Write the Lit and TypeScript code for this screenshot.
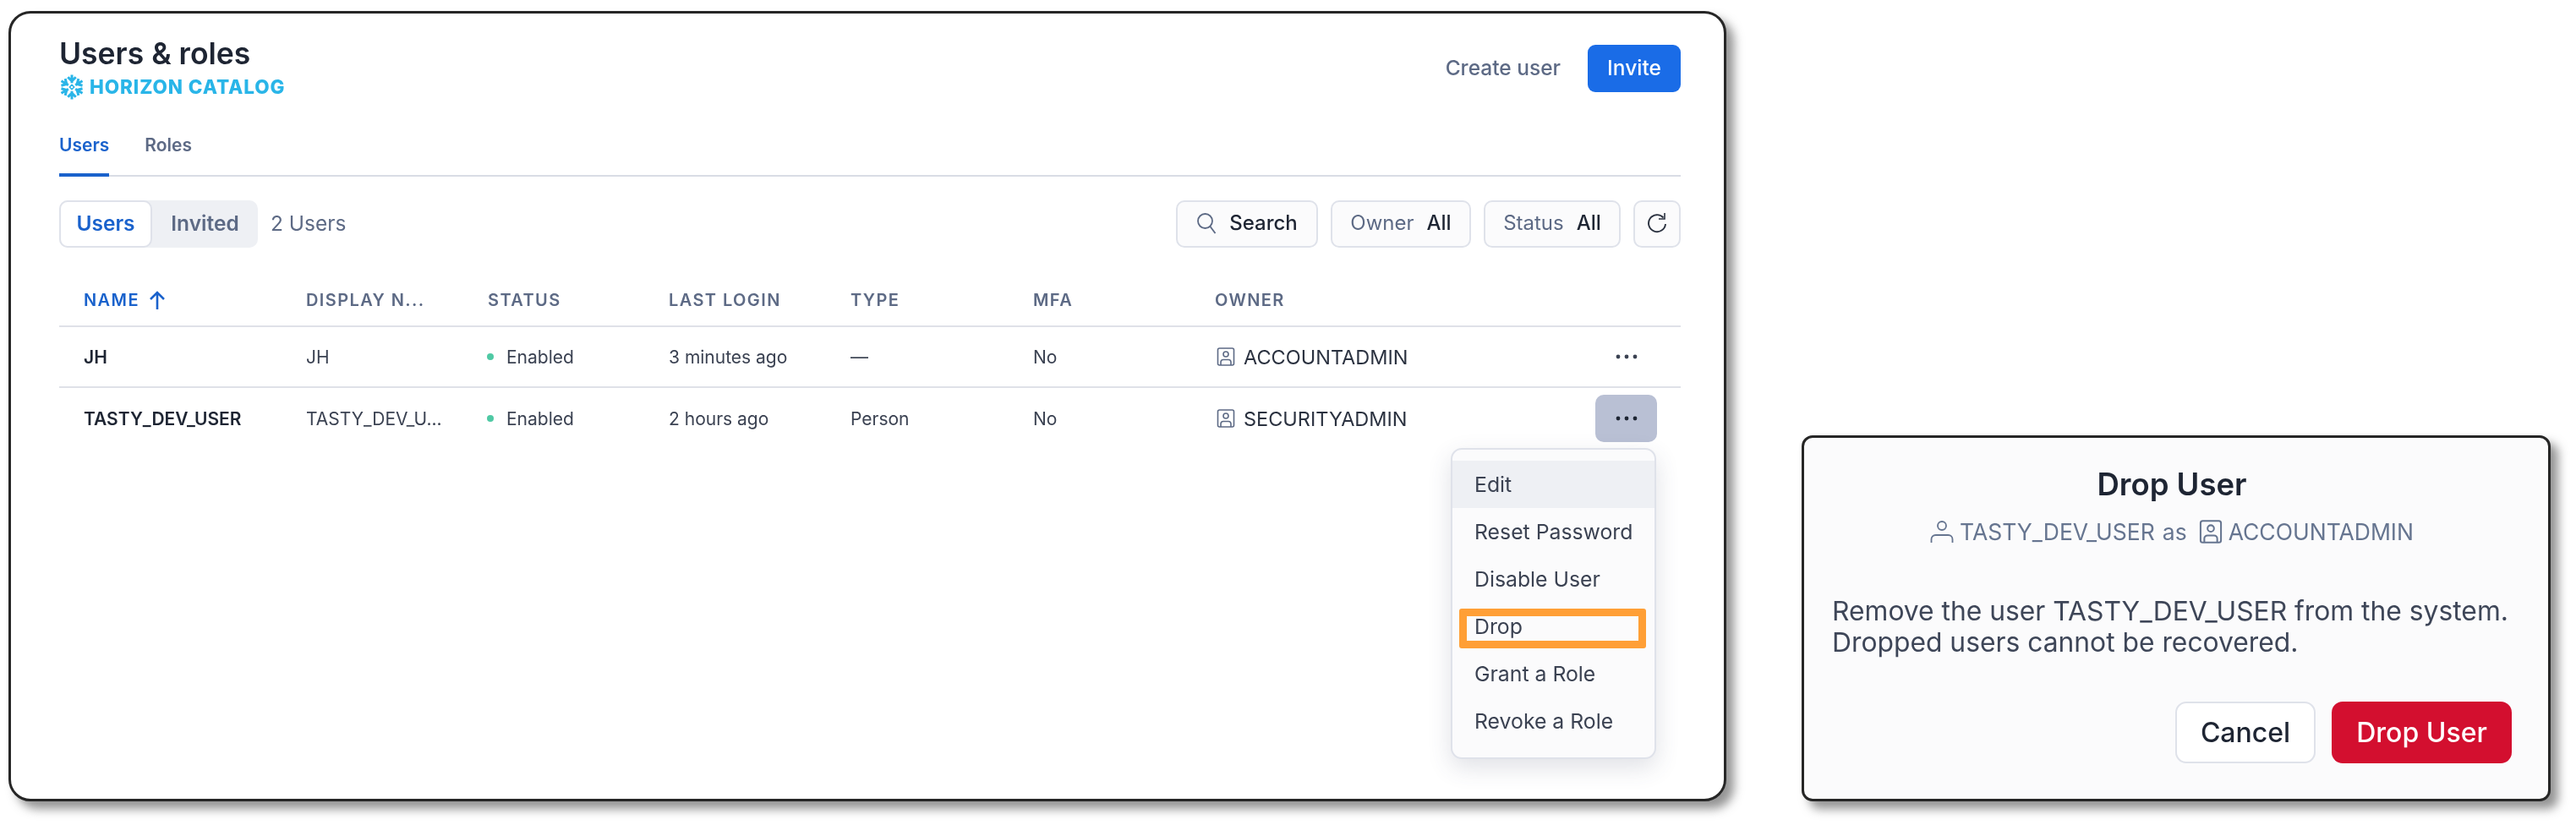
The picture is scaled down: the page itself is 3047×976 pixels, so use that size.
import { LitElement, html, css, svg } from "lit";
import { customElement } from "lit/decorators.js";

const roleIcon = html`<svg class="role" viewBox="0 0 22 22" fill="none" stroke="currentColor" stroke-width="1.6"><rect x="1.5" y="1" width="19" height="20" rx="2"/><circle cx="11" cy="8" r="3"/><path d="M5 21v-3.5a3 3 0 0 1 3-3h6a3 3 0 0 1 3 3V21"/></svg>`;
const userIcon = html`<svg class="user" viewBox="0 0 28 28" fill="none" stroke="currentColor" stroke-width="1.8"><circle cx="14" cy="7" r="5"/><path d="M1.5 27v-4a5 5 0 0 1 5-5h15a5 5 0 0 1 5 5v4"/></svg>`;
const dots = html`<svg class="dots" viewBox="0 0 26 6" fill="currentColor"><circle cx="3" cy="3" r="2.4"/><circle cx="13" cy="3" r="2.4"/><circle cx="23" cy="3" r="2.4"/></svg>`;
const flakeArm = (a: number) => svg`<g transform="rotate(${a} 14 14)"><path d="M14 .5V9.5M9.6 3 14 7.4l4.4-4.4" /></g>`;
const flake = html`<svg class="flake" viewBox="0 0 28 28" fill="none" stroke="#29b5e8" stroke-width="2.8">${[0, 60, 120, 180, 240, 300].map(flakeArm)}<path d="M14 11.5 16.5 14 14 16.5 11.5 14Z" stroke-width="1.4"/></svg>`;

const rows = [
  { name: "JH", display: "JH", login: "3 minutes ago", type: "—", owner: "ACCOUNTADMIN", open: false },
  { name: "TASTY_DEV_USER", display: "TASTY_DEV_U...", login: "2 hours ago", type: "Person", owner: "SECURITYADMIN", open: true },
];
const menu = ["Edit", "Reset Password", "Disable User", "Drop", "Grant a Role", "Revoke a Role"];

@customElement("app-root")
export class AppRoot extends LitElement {
  static styles = css`
    :host { display: block; width: 3047px; height: 976px; background: #fff; font-family: Inter, "Liberation Sans", sans-serif; overflow: hidden; }
    * { box-sizing: border-box; }
    .page { display: flex; align-items: flex-start; gap: 89px; padding: 13px 0 0 10px; filter: blur(0.5px); }
    .card { position: relative; width: 2032px; height: 935px; flex: none; background: #fff; border: 3px solid #262626; border-radius: 26px; padding: 25px 51px 0 57px; box-shadow: 9px 9px 12px rgba(60,60,60,.55); }
    .head { display: flex; justify-content: space-between; align-items: flex-start; }
    h1 { margin: 0; font-size: 35.5px; line-height: 46px; font-weight: 600; color: #1e2533; }
    .brand { display: flex; align-items: center; gap: 6px; margin-top: 1px; font-size: 22.5px; line-height: 30px; font-weight: 800; color: #29b5e8; letter-spacing: .9px; }
    .flake { width: 30px; height: 30px; flex: none; }
    .head-actions { display: flex; align-items: center; gap: 32px; margin-top: 12px; }
    .create { font-size: 24.5px; font-weight: 500; color: #5d6a85; padding-bottom: 3px; }
    .invite { width: 110px; height: 56px; border-radius: 9px; background: #1a6ce7; color: #fff; font-size: 24.5px; font-weight: 500; display: flex; align-items: center; justify-content: center; padding-bottom: 3px; }
    .tabs { display: flex; gap: 42px; height: 66px; margin-top: 25px; border-bottom: 2px solid #d9dce5; font-size: 21px; font-weight: 600; color: #5d6a85; }
    .tab { padding-top: 16px; height: 66px; line-height: 26px; }
    .tab.on { color: #1a62cc; border-bottom: 4px solid #1a62cc; }
    .bar { display: flex; align-items: center; margin-top: 28px; height: 56px; }
    .seg { display: flex; height: 56px; width: 235px; background: #eef0f4; border-radius: 10px; font-size: 24.5px; font-weight: 600; color: #5d6a85; }
    .seg > div { display: flex; align-items: center; justify-content: center; padding-bottom: 2px; }
    .seg .on { width: 110px; background: #fff; color: #1a62cc; border: 2px solid #dfe2ea; border-radius: 10px; }
    .seg .off { flex: 1; }
    .count { margin-left: 15px; font-size: 24.5px; color: #5d6a85; padding-bottom: 2px; }
    .tools { margin-left: auto; display: flex; gap: 15px; }
    .btn { height: 56px; background: #fbfbfc; border: 2px solid #dfe2ea; border-radius: 10px; display: flex; align-items: center; justify-content: center; gap: 15px; padding-bottom: 3px; font-size: 24px; font-weight: 500; color: #1e2533; }
    .btn span { font-weight: 400; color: #5d6a85; }
    .btn.s { width: 168px; } .btn.o { width: 166px; } .btn.t { width: 162px; } .btn.r { width: 56px; }
    .btn svg { width: 24px; height: 26px; flex: none; }
    .btn.s svg { color: #5d6a85; }
    .tbl { margin-top: 28px; }
    .row { display: grid; grid-template-columns: 263px 215px 214px 215px 216px 215px 1fr 73px; padding: 0 28px 0 29px; height: 72px; align-items: center; border-bottom: 2px solid #dfe1e8; font-size: 21px; color: #3b4252; }
    .row.hd { height: 66px; padding-top: 4px; font-size: 20px; font-weight: 600; letter-spacing: 1.4px; color: #5d6a85; }
    .row:last-child { border-bottom: none; }
    .sort { display: flex; align-items: center; gap: 11px; color: #1a62cc; }
    .sort svg { width: 20px; height: 24px; }
    .nm { font-weight: 600; color: #1e2533; }
    .st { display: flex; align-items: center; gap: 15px; }
    .dot { width: 8px; height: 8px; border-radius: 50%; background: #4fc9a4; margin-left: -1px; }
    .own { display: flex; align-items: center; gap: 10px; font-size: 23.5px; color: #2b3240; }
    .own .role { color: #5d6a85; margin-left: 2px; }
    .role { width: 22px; height: 22px; flex: none; }
    .act { height: 56px; border-radius: 10px; display: flex; align-items: center; justify-content: center; color: #3b4252; }
    .act.open { background: #b9c0d4; color: #1e2533; }
    .dots { width: 26px; height: 6px; }
    .menu { position: absolute; left: 1703px; top: 514px; width: 243px; height: 368px; padding: 13px 0; background: #fbfbfc; border: 2px solid #dfe2ea; border-radius: 13px; box-shadow: 0 10px 28px rgba(60,70,100,.16); font-size: 24.8px; color: #3b4252; }
    .mi { height: 56px; padding-left: 26px; display: flex; align-items: center; }
    .mi.hover { background: #eef0f4; }
    .mark { position: absolute; left: 1713px; top: 704px; width: 221px; height: 47px; border: 9px solid #ff9f36; border-radius: 3px; }
    .dialog { width: 886px; height: 433px; flex: none; margin-top: 502px; background: #fbfbfc; border: 3px solid #262626; border-radius: 13px; padding: 30px 43px 0 33px; box-shadow: 9px 9px 12px rgba(60,60,60,.55); display: flex; flex-direction: column; }
    h2 { margin: 0; text-align: center; font-size: 36.5px; line-height: 50px; font-weight: 600; color: #1e2533; }
    .sub { display: flex; justify-content: center; align-items: center; gap: 7px; margin-top: 15px; font-size: 26.5px; color: #667590; height: 32px; }
    .sub span { margin: 0 7px 0 2px; }
    .user { width: 28px; height: 28px; flex: none; }
    .sub .role { width: 28px; height: 30px; }
    .body { margin: 59px 0 0; font-size: 31.8px; line-height: 37px; color: #3e4658; white-space: nowrap; }
    .foot { display: flex; justify-content: flex-end; gap: 19px; margin-top: 52px; }
    .foot div { height: 73px; border-radius: 13px; display: flex; align-items: center; justify-content: center; font-size: 32px; font-weight: 500; }
    .cancel { width: 166px; background: #fff; border: 2px solid #dfe2ea; color: #1e2533; }
    .drop { width: 213px; background: #d30f2f; color: #fff; }
  `;

  render() {
    return html`<div class="page">
      <section class="card">
        <div class="head">
          <div>
            <h1>Users &amp; roles</h1>
            <div class="brand">${flake}HORIZON CATALOG</div>
          </div>
          <div class="head-actions"><div class="create">Create user</div><div class="invite">Invite</div></div>
        </div>
        <div class="tabs"><div class="tab on">Users</div><div class="tab">Roles</div></div>
        <div class="bar">
          <div class="seg"><div class="on">Users</div><div class="off">Invited</div></div>
          <div class="count">2 Users</div>
          <div class="tools">
            <div class="btn s"><svg viewBox="0 0 24 26" fill="none" stroke="currentColor" stroke-width="1.8"><circle cx="10.5" cy="10.5" r="8.5"/><path d="m16.5 17 6 8"/></svg>Search</div>
            <div class="btn o"><span>Owner</span>All</div>
            <div class="btn t"><span>Status</span>All</div>
            <div class="btn r"><svg viewBox="0 0 24 26" fill="none" stroke="#2b3240" stroke-width="1.9"><path d="M19.5 6.5A10 10 0 1 0 22 14"/><path d="M21 1v7h-7" stroke-width="1.6"/></svg></div>
          </div>
        </div>
        <div class="tbl">
          <div class="row hd">
            <div class="sort">NAME<svg viewBox="0 0 20 24" fill="none" stroke="currentColor" stroke-width="2.6"><path d="M10 23V3M2 11l8-8 8 8"/></svg></div>
            <div>DISPLAY N...</div><div>STATUS</div><div>LAST LOGIN</div><div>TYPE</div><div>MFA</div><div>OWNER</div><div></div>
          </div>
          ${rows.map((r) => html`<div class="row">
            <div class="nm">${r.name}</div>
            <div>${r.display}</div>
            <div class="st"><i class="dot"></i>Enabled</div>
            <div>${r.login}</div>
            <div>${r.type}</div>
            <div>No</div>
            <div class="own">${roleIcon}${r.owner}</div>
            <div class="act ${r.open ? "open" : ""}">${dots}</div>
          </div>`)}
        </div>
        <div class="menu">${menu.map((m, i) => html`<div class="mi ${i === 0 ? "hover" : ""}">${m}</div>`)}</div>
        <div class="mark"></div>
      </section>
      <section class="dialog">
        <h2>Drop User</h2>
        <div class="sub">${userIcon}TASTY_DEV_USER<span>as</span>${roleIcon}ACCOUNTADMIN</div>
        <p class="body">Remove the user TASTY_DEV_USER from the system.<br />Dropped users cannot be recovered.</p>
        <div class="foot"><div class="cancel">Cancel</div><div class="drop">Drop User</div></div>
      </section>
    </div>`;
  }
}
